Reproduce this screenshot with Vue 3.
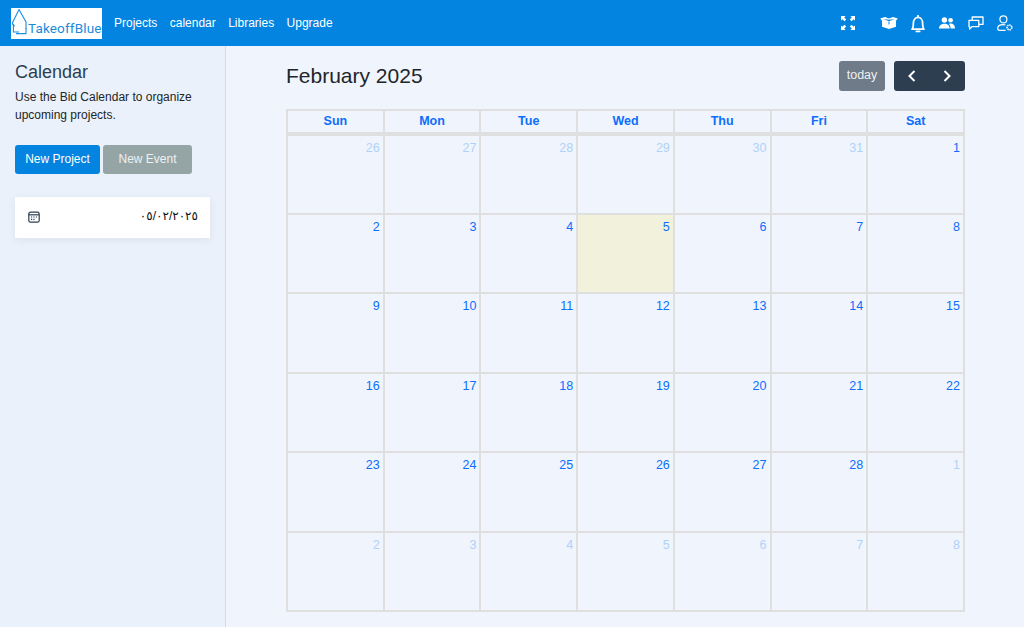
<script setup>
const days = ['Sun', 'Mon', 'Tue', 'Wed', 'Thu', 'Fri', 'Sat']
const prev = [26, 27, 28, 29, 30, 31]
const cells = [
  ...prev.map((n) => ({ n, muted: true })),
  ...Array.from({ length: 28 }, (_, i) => ({ n: i + 1, current: i + 1 === 5 })),
  ...Array.from({ length: 8 }, (_, i) => ({ n: i + 1, muted: true })),
]
const weeks = []
for (let i = 0; i < cells.length; i += 7) weeks.push(cells.slice(i, i + 7))
const navItems = ['Projects', 'calendar', 'Libraries', 'Upgrade']
</script>

<template>
  <div class="page">
    <header class="topbar">
      <div class="logo">
        <svg class="logo-mark" viewBox="0 0 18 31" width="18" height="31" fill="none" stroke="#1a8fe3" stroke-width="1.1">
          <path d="M8 1.6 L1.6 14.5 C1 17 3 18 4 18" />
          <path d="M8 1.6 L15 14 V21" />
          <path d="M2.4 16 V24 H8" />
          <path d="M15 20 V25.6 H5" />
        </svg>
        <span class="logo-text">TakeoffBlue</span>
      </div>
      <nav class="nav">
        <a v-for="item in navItems" :key="item" class="nav-link">{{ item }}</a>
      </nav>
      <div class="top-icons">
        <svg class="ic expand" viewBox="0 0 14 14" width="14" height="14" fill="#fff">
          <path d="M0 0h4.6L3.2 1.4 5.2 3.4 3.4 5.2 1.4 3.2 0 4.6z" />
          <path d="M14 0v4.6L12.6 3.2 10.6 5.2 8.8 3.4 10.8 1.4 9.4 0z" />
          <path d="M0 14V9.4L1.4 10.8 3.4 8.8 5.2 10.6 3.2 12.6 4.6 14z" />
          <path d="M14 14H9.4L10.8 12.6 8.8 10.6 10.6 8.8 12.6 10.8 14 9.4z" />
        </svg>
        <svg class="ic box" viewBox="0 0 18 12" width="18" height="12" fill="#fff">
          <path d="M0.2 1.6 L5 0 L9 1.6 L13 0 L17.8 1.6 L16 3.8 L16 9.8 L9 12 L2 9.8 L2 3.8Z" />
          <path d="M3.4 2 L9 4.2 L14.6 2 L9 2.8Z" fill="#0284e0" />
          <path d="M9 4.6 V7.4" stroke="#0284e0" stroke-width="1" />
        </svg>
        <svg class="ic bell" viewBox="0 0 16 18" width="16" height="18" fill="none" stroke="#fff" stroke-width="1.7">
          <path d="M2 14.2 C3.4 12.6 3.4 11 3.4 8 C3.4 4.6 5.4 2.4 8 2.4 C10.6 2.4 12.6 4.6 12.6 8 C12.6 11 12.6 12.6 14 14.2Z" stroke-linejoin="round" />
          <path d="M8 0.4 V2.2 M6.3 16.4 H9.7" stroke-linecap="round" />
        </svg>
        <svg class="ic people" viewBox="0 0 16 12" width="16" height="12" fill="#fff">
          <circle cx="5.4" cy="3" r="2.7" />
          <circle cx="11.6" cy="3.3" r="2.3" />
          <path d="M0 11.6 C0 8.2 2.4 6.7 5.4 6.7 C8.4 6.7 10.6 8.2 10.6 11.6Z" />
          <path d="M11.6 11.6 C11.6 9.6 11 8.1 9.9 7 C10.6 6.7 11 6.6 11.8 6.6 C14.2 6.6 16 8.2 16 11.6Z" />
        </svg>
        <svg class="ic chat" viewBox="0 0 16 14" width="16" height="14" fill="none" stroke="#fff" stroke-width="1.3" stroke-linejoin="round">
          <path d="M1 4.4 H10.8 V10.6 H4 L1.6 13 V10.6 H1Z" />
          <path d="M4.2 4.2 V1 H15 V8.4 H10.8" />
        </svg>
        <svg class="ic user" viewBox="0 0 16 17" width="16" height="17" fill="none" stroke="#fff" stroke-width="1.2">
          <circle cx="6.4" cy="4.4" r="3.5" />
          <path d="M8.4 10 C7.8 9.8 7.1 9.7 6.4 9.7 C3.2 9.7 0.7 11.2 0.7 13.4 C0.7 14.6 1.5 15.3 3 15.3 H8.6" />
          <circle cx="12.4" cy="12.4" r="2.4" stroke-width="1.6" stroke-dasharray="1.4 0.6" />
        </svg>
      </div>
    </header>

    <div class="body">
      <aside class="sidebar">
        <h2 class="side-title">Calendar</h2>
        <p class="side-text">Use the Bid Calendar to organize upcoming projects.</p>
        <div class="side-actions">
          <button class="btn btn-primary">New Project</button>
          <button class="btn btn-muted">New Event</button>
        </div>
        <div class="date-card">
          <svg class="date-icon" viewBox="0 0 12 12" width="12" height="12" fill="none" stroke="#2c3e50" stroke-width="1.2">
            <rect x="0.8" y="1.2" width="10.4" height="10" rx="1.8" />
            <path d="M0.8 3.8 H11.2" />
            <path d="M3 6 H4.2 M5.4 6 H6.6 M7.8 6 H9 M3 8.4 H4.2 M5.4 8.4 H6.6" stroke-width="1.1" />
          </svg>
          <span class="date-value">٠٥/٠٢/٢٠٢٥</span>
        </div>
      </aside>

      <main class="main">
        <div class="toolbar">
          <h1 class="month">February 2025</h1>
          <div class="controls">
            <button class="today-btn">today</button>
            <div class="pager">
              <button class="page-btn" aria-label="prev">
                <svg viewBox="0 0 10 14" width="10" height="14" fill="none" stroke="#fff" stroke-width="2"><path d="M7.5 2 L2.5 7 L7.5 12" /></svg>
              </button>
              <button class="page-btn" aria-label="next">
                <svg viewBox="0 0 10 14" width="10" height="14" fill="none" stroke="#fff" stroke-width="2"><path d="M2.5 2 L7.5 7 L2.5 12" /></svg>
              </button>
            </div>
          </div>
        </div>
        <table class="calendar">
          <thead>
            <tr>
              <th v-for="d in days" :key="d">{{ d }}</th>
            </tr>
          </thead>
          <tbody>
            <tr v-for="(week, w) in weeks" :key="w">
              <td v-for="(c, i) in week" :key="i" :class="{ muted: c.muted, current: c.current }">{{ c.n }}</td>
            </tr>
          </tbody>
        </table>
      </main>
    </div>
  </div>
</template>

<style>
html, body { margin: 0; padding: 0; }
</style>

<style scoped>
.page {
  width: 1024px;
  height: 627px;
  overflow: hidden;
  display: flex;
  flex-direction: column;
  font-family: "Liberation Sans", Arial, "DejaVu Sans", sans-serif;
  background: #f0f4fc;
}
.topbar {
  height: 46px;
  flex: none;
  background: #0284e0;
  display: flex;
  align-items: center;
  padding: 0 11px;
  box-sizing: border-box;
}
.logo {
  width: 91px;
  height: 31px;
  margin-top: 1px;
  background: #fff;
  display: flex;
  align-items: flex-end;
  flex: none;
  box-sizing: border-box;
}
.logo-mark { flex: none; }
.logo-text {
  font-family: Roboto, "Liberation Sans", sans-serif;
  font-size: 13.5px;
  font-weight: 400;
  color: #1a8bdb;
  line-height: 16px;
  margin-left: -1px;
  margin-bottom: 3px;
  letter-spacing: 0.15px;
  white-space: nowrap;
}
.nav {
  display: flex;
  gap: 12.4px;
  margin-left: 12px;
  margin-top: -1px;
}
.nav-link {
  color: #fff;
  font-size: 12px;
}
.top-icons {
  margin-left: auto;
  display: flex;
  align-items: center;
}
.ic { display: block; flex: none; }
.expand { margin-right: 25px; }
.box { margin-right: 12px; margin-top: -1px; }
.bell { margin-right: 13px; margin-top: 1px; }
.people { margin-right: 13px; }
.chat { margin-right: 13px; }
.user { margin-top: 1px; }

.body { flex: 1; display: flex; min-height: 0; }
.sidebar {
  width: 226px;
  flex: none;
  box-sizing: border-box;
  background: #ebf1fa;
  border-right: 1px solid #d6dce4;
  padding: 15px 15px 0;
}
.side-title {
  margin: 0;
  font-size: 18px;
  font-weight: 400;
  line-height: 22px;
  color: #2c3e50;
}
.side-text {
  margin: 5px 0 0;
  font-size: 12px;
  line-height: 18px;
  color: #212529;
}
.side-actions {
  display: flex;
  gap: 3px;
  margin-top: 21px;
}
.btn {
  height: 29px;
  border: 0;
  border-radius: 3px;
  font: 400 12px "Liberation Sans", Arial, sans-serif;
  color: #fff;
  padding: 0 0 2px;
}
.btn-primary { width: 85px; background: #0284e0; }
.btn-muted { width: 89px; background: #95a5a6; color: #eef1f1; }
.date-card {
  width: 195px;
  height: 41px;
  margin-top: 23px;
  background: #fff;
  box-shadow: 0 2px 8px rgba(44, 62, 80, 0.08);
  display: flex;
  align-items: center;
  justify-content: space-between;
  padding: 0 12px 0 13px;
  box-sizing: border-box;
}
.date-icon { margin-top: -1px; }
.date-value {
  font-size: 12px;
  color: #111;
  direction: ltr;
  unicode-bidi: isolate;
  margin-top: -3px;
}
.main {
  flex: 1;
  padding: 15px 59px 0 60px;
  min-width: 0;
}
.toolbar {
  display: flex;
  align-items: center;
  justify-content: space-between;
  height: 30px;
  margin-bottom: 18px;
}
.month {
  margin: 0;
  font-size: 21px;
  font-weight: 400;
  color: #212529;
  line-height: 30px;
}
.controls { display: flex; gap: 9px; }
.today-btn {
  width: 46px;
  height: 30px;
  border: 0;
  border-radius: 3px;
  background: #6f7b88;
  color: #eef1f3;
  font: 400 12.5px "Liberation Sans", Arial, sans-serif;
  padding: 0 0 2px;
}
.pager {
  width: 71px;
  height: 30px;
  border-radius: 3px;
  background: #2c3e50;
  display: flex;
}
.page-btn {
  flex: 1;
  border: 0;
  background: transparent;
  padding: 0;
  display: flex;
  align-items: center;
  justify-content: center;
}
.calendar {
  width: 679px;
  height: 503px;
  table-layout: fixed;
  border-collapse: collapse;
  border: 2px solid #dfdfdf;
  font-size: 12.5px;
}
th, td {
  border: 2px solid #dfdfdf;
  padding: 0;
}
thead tr { height: 24px; }
thead th {
  border-bottom-width: 4px;
  color: #0d6efd;
  font-size: 12.5px;
  font-weight: 700;
  text-align: center;
  vertical-align: middle;
  padding-bottom: 2px;
}
td {
  text-align: right;
  vertical-align: top;
  height: 77px;
  padding: 4px 3px 0 0;
  color: #0d6efd;
  line-height: 16px;
  box-sizing: border-box;
}
td.muted { color: #afd2fb; }
td.current { background: #f2f1dc; }
</style>
